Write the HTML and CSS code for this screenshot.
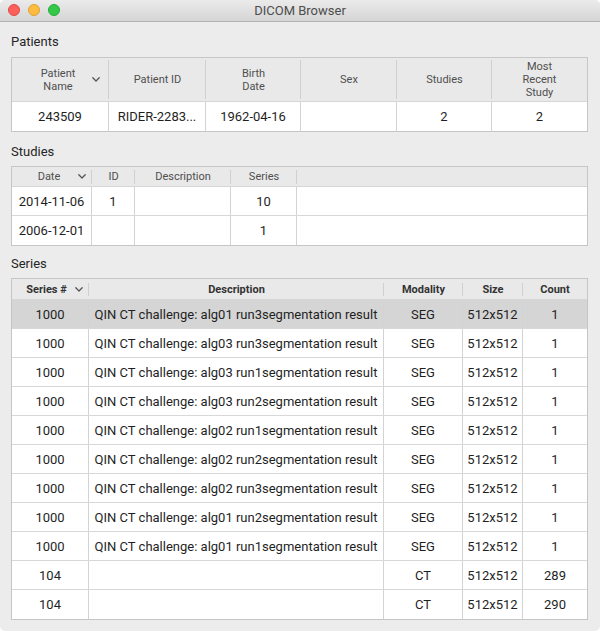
FILE: index.html
```html
<!DOCTYPE html>
<html>
<head>
<meta charset="utf-8">
<title>DICOM Browser</title>
<link rel="stylesheet" href="styles.css">
</head>
<body>
<div class="window">
  <div class="titlebar">
    <div class="lights">
      <span class="light red"></span>
      <span class="light yellow"></span>
      <span class="light green"></span>
    </div>
    <div class="title">DICOM Browser</div>
  </div>
  <div class="content">
    <section class="group">
      <div class="label">Patients</div>
      <div class="table patients">
        <div class="thead">
          <div class="th sorted"><span class="th-text">Patient<br>Name</span><svg class="chev" width="8" height="5" viewBox="0 0 8 5"><polyline points="0.8,0.8 4,4 7.2,0.8"/></svg></div>
          <div class="th"><span class="th-text">Patient ID</span></div>
          <div class="th"><span class="th-text">Birth<br>Date</span></div>
          <div class="th"><span class="th-text">Sex</span></div>
          <div class="th"><span class="th-text">Studies</span></div>
          <div class="th last"><span class="th-text">Most<br>Recent<br>Study</span></div>
        </div>
        <div class="tr">
          <div class="td">243509</div>
          <div class="td">RIDER-2283...</div>
          <div class="td">1962-04-16</div>
          <div class="td"></div>
          <div class="td">2</div>
          <div class="td last">2</div>
        </div>
      </div>
    </section>

    <section class="group">
      <div class="label">Studies</div>
      <div class="table studies">
        <div class="thead">
          <div class="th sorted"><span class="th-text">Date</span><svg class="chev" width="8" height="5" viewBox="0 0 8 5"><polyline points="0.8,0.8 4,4 7.2,0.8"/></svg></div>
          <div class="th"><span class="th-text">ID</span></div>
          <div class="th"><span class="th-text">Description</span></div>
          <div class="th"><span class="th-text">Series</span></div>
          <div class="th filler"></div>
        </div>
        <div class="tr">
          <div class="td">2014-11-06</div>
          <div class="td">1</div>
          <div class="td"></div>
          <div class="td">10</div>
          <div class="td filler"></div>
        </div>
        <div class="tr lastrow">
          <div class="td">2006-12-01</div>
          <div class="td"></div>
          <div class="td"></div>
          <div class="td">1</div>
          <div class="td filler"></div>
        </div>
      </div>
    </section>

    <section class="group">
      <div class="label">Series</div>
      <div class="table series">
        <div class="thead">
          <div class="th sorted"><span class="th-text">Series #</span><svg class="chev" width="8" height="5" viewBox="0 0 8 5"><polyline points="0.8,0.8 4,4 7.2,0.8"/></svg></div>
          <div class="th"><span class="th-text">Description</span></div>
          <div class="th"><span class="th-text">Modality</span></div>
          <div class="th"><span class="th-text">Size</span></div>
          <div class="th last"><span class="th-text">Count</span></div>
        </div>
        <div class="tr selected"><div class="td">1000</div><div class="td">QIN CT challenge: alg01 run3segmentation result</div><div class="td">SEG</div><div class="td">512x512</div><div class="td last">1</div></div>
        <div class="tr"><div class="td">1000</div><div class="td">QIN CT challenge: alg03 run3segmentation result</div><div class="td">SEG</div><div class="td">512x512</div><div class="td last">1</div></div>
        <div class="tr"><div class="td">1000</div><div class="td">QIN CT challenge: alg03 run1segmentation result</div><div class="td">SEG</div><div class="td">512x512</div><div class="td last">1</div></div>
        <div class="tr"><div class="td">1000</div><div class="td">QIN CT challenge: alg03 run2segmentation result</div><div class="td">SEG</div><div class="td">512x512</div><div class="td last">1</div></div>
        <div class="tr"><div class="td">1000</div><div class="td">QIN CT challenge: alg02 run1segmentation result</div><div class="td">SEG</div><div class="td">512x512</div><div class="td last">1</div></div>
        <div class="tr"><div class="td">1000</div><div class="td">QIN CT challenge: alg02 run2segmentation result</div><div class="td">SEG</div><div class="td">512x512</div><div class="td last">1</div></div>
        <div class="tr"><div class="td">1000</div><div class="td">QIN CT challenge: alg02 run3segmentation result</div><div class="td">SEG</div><div class="td">512x512</div><div class="td last">1</div></div>
        <div class="tr"><div class="td">1000</div><div class="td">QIN CT challenge: alg01 run2segmentation result</div><div class="td">SEG</div><div class="td">512x512</div><div class="td last">1</div></div>
        <div class="tr"><div class="td">1000</div><div class="td">QIN CT challenge: alg01 run1segmentation result</div><div class="td">SEG</div><div class="td">512x512</div><div class="td last">1</div></div>
        <div class="tr"><div class="td">104</div><div class="td"></div><div class="td">CT</div><div class="td">512x512</div><div class="td last">289</div></div>
        <div class="tr lastrow"><div class="td">104</div><div class="td"></div><div class="td">CT</div><div class="td">512x512</div><div class="td last">290</div></div>
      </div>
    </section>
  </div>
</div>
</body>
</html>
```

FILE: styles.css
```css
* { box-sizing: border-box; }

html, body {
  margin: 0;
  padding: 0;
  background: #ffffff;
}

body {
  font-family: "Roboto", "Inter", "Liberation Sans", sans-serif;
  font-feature-settings: "calt" 0;
  color: #1f1f1f;
  width: 600px;
  height: 631px;
  overflow: hidden;
}

.window {
  width: 600px;
  height: 631px;
  background: #ececec;
  border-radius: 5px;
  overflow: hidden;
  display: flex;
  flex-direction: column;
}

.titlebar {
  height: 22px;
  flex: none;
  background: linear-gradient(#ebebeb, #d5d5d5);
  border-bottom: 1px solid #b3b3b3;
  display: flex;
  align-items: center;
  justify-content: center;
  position: relative;
}

.lights {
  position: absolute;
  left: 8px;
  top: 4px;
  display: flex;
  gap: 8px;
}

.light {
  width: 12px;
  height: 12px;
  border-radius: 50%;
  display: block;
}
.red { background: #fc605b; border: 1px solid #de4a45; }
.yellow { background: #fdbc40; border: 1px solid #dea033; }
.green { background: #34c84a; border: 1px solid #27aa35; }

.title {
  font-size: 13px;
  color: #4d4d4d;
}

.content {
  padding: 0 11px;
  display: flex;
  flex-direction: column;
}

.group {
  padding-top: 12px;
  display: flex;
  flex-direction: column;
}
.group + .group { padding-top: 12px; }
.group:last-child { padding-top: 10px; }

.label {
  font-size: 13px;
  line-height: 16px;
  height: 16px;
  color: #262626;
  margin-bottom: 7px;
}
.group + .group .label { margin-bottom: 6px; }

.table {
  border: 1px solid #c6c6c6;
  background: #ffffff;
  width: 577px;
}

.thead, .tr {
  display: grid;
}

.thead {
  background: #e9e9e9;
  border-bottom: 1px solid #d6d6d6;
}

.th {
  display: flex;
  align-items: center;
  justify-content: center;
  font-size: 11px;
  line-height: 13px;
  color: #4f4f4f;
  text-align: center;
  background: linear-gradient(#d0d0d0, #d0d0d0) right center / 1px calc(100% - 4px) no-repeat;
}
.th.last, .th.filler { background: none; }

.th.sorted .th-text { flex: 1; }
.chev {
  flex: none;
  margin-right: 9px;
  fill: none;
  stroke: #555555;
  stroke-width: 1.3;
  stroke-linecap: round;
  stroke-linejoin: round;
}

.tr {
  border-bottom: 1px solid #d8d8d8;
}
.tr.lastrow { border-bottom: none; }

.td {
  font-size: 13px;
  display: flex;
  align-items: center;
  justify-content: center;
  white-space: nowrap;
  overflow: hidden;
  border-right: 1px solid #d3d3d3;
  color: #1f1f1f;
}
.td.last, .td.filler { border-right: none; }

/* Patients */
.patients .thead, .patients .tr {
  grid-template-columns: 97px 97px 95px 96px 95px 95px;
}
.patients .thead { height: 44px; }
.patients .tr { height: 29px; border-bottom: none; }
.patients .th.sorted .th-text { padding-left: 12px; }

/* Studies */
.studies .thead, .studies .tr {
  grid-template-columns: 80px 43px 96px 66px 1fr;
}
.studies .thead { height: 20px; }
.studies .th { background-size: 1px calc(100% - 5px); }
.studies .th.last, .studies .th.filler { background: none; }
.studies .tr { height: 29px; }
.studies .th.sorted .th-text { padding-left: 8px; }
.studies .chev { margin-right: 6px; }

/* Series */
.series .thead, .series .tr {
  grid-template-columns: 77px 295px 79px 60px 64px;
}
.series .thead { height: 21px; }
.series .th {
  font-weight: 700;
  color: #333333;
  background-size: 1px calc(100% - 7px);
}
.series .th.last { background: none; }
.series .th.sorted .th-text { padding-left: 6px; }
.series .chev { margin-right: 6px; }
.series .tr { height: 29px; }
.series .tr.selected { background: #d5d5d5; }
```
